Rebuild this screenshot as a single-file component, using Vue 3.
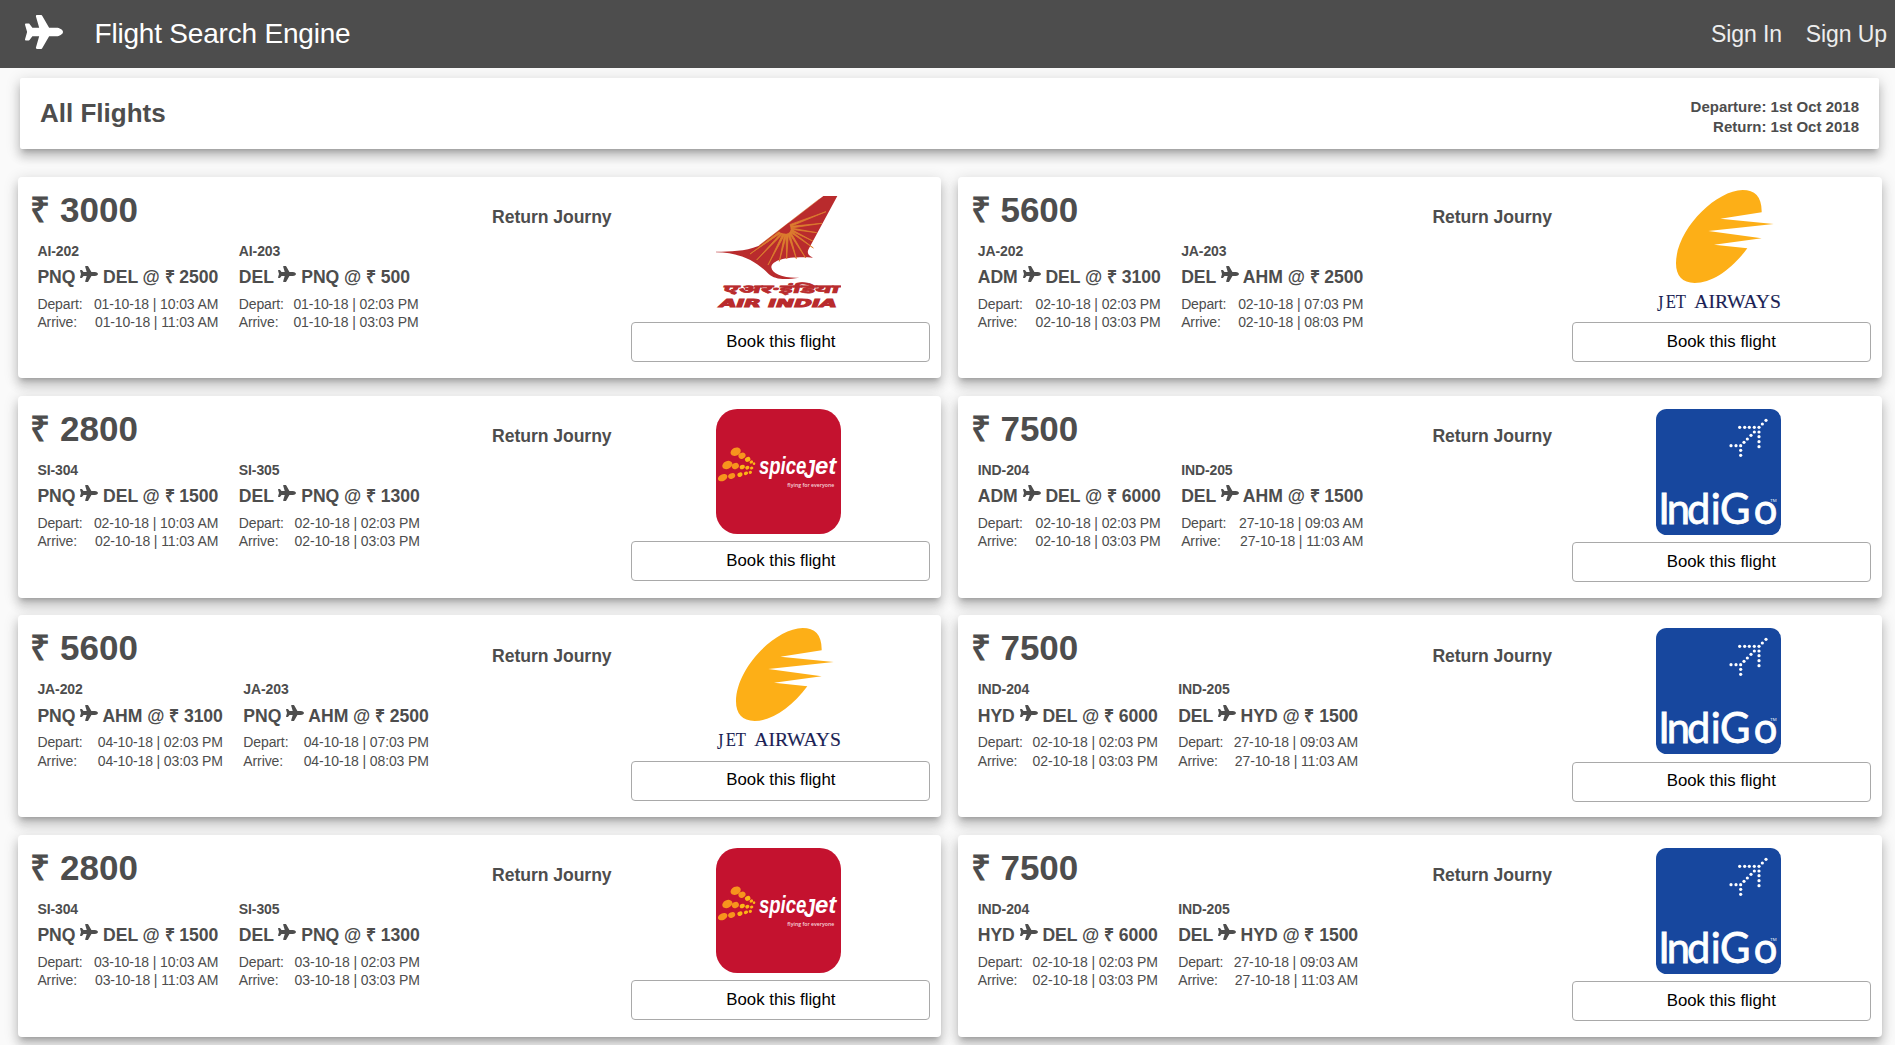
<script setup>
const planePath =
  'M480 192H365.71L260.61 8.06A16.014 16.014 0 0 0 246.71 0h-65.5c-10.63 0-18.3 10.17-15.38 20.39L214.86 192H112l-43.2-57.6c-3.02-4.03-7.77-6.4-12.8-6.4H16.01C5.6 128-2.04 137.78.49 147.88L32 256 .49 364.12C-2.04 374.22 5.6 384 16.01 384H56c5.04 0 9.78-2.37 12.8-6.4L112 320h102.86l-49.03 171.6c-2.92 10.22 4.75 20.4 15.38 20.4h65.5c5.74 0 11.04-3.08 13.89-8.06L365.71 320H480c35.35 0 96-28.65 96-64s-60.65-64-96-64z'

const leg = (code, from, to, price, depart, arrive) => ({ code, from, to, price, depart, arrive })

const spice = (day) => ({
  airline: 'spicejet',
  price: 2800,
  legs: [
    leg('SI-304', 'PNQ', 'DEL', 1500, `${day} | 10:03 AM`, `${day} | 11:03 AM`),
    leg('SI-305', 'DEL', 'PNQ', 1300, `${day} | 02:03 PM`, `${day} | 03:03 PM`),
  ],
})

const indigo = (home) => ({
  airline: 'indigo',
  price: 7500,
  legs: [
    leg('IND-204', home[0], 'DEL', 6000, '02-10-18 | 02:03 PM', '02-10-18 | 03:03 PM'),
    leg('IND-205', 'DEL', home[1], 1500, '27-10-18 | 09:03 AM', '27-10-18 | 11:03 AM'),
  ],
})

const flights = [
  {
    airline: 'airindia',
    price: 3000,
    legs: [
      leg('AI-202', 'PNQ', 'DEL', 2500, '01-10-18 | 10:03 AM', '01-10-18 | 11:03 AM'),
      leg('AI-203', 'DEL', 'PNQ', 500, '01-10-18 | 02:03 PM', '01-10-18 | 03:03 PM'),
    ],
  },
  {
    airline: 'jet',
    price: 5600,
    legs: [
      leg('JA-202', 'ADM', 'DEL', 3100, '02-10-18 | 02:03 PM', '02-10-18 | 03:03 PM'),
      leg('JA-203', 'DEL', 'AHM', 2500, '02-10-18 | 07:03 PM', '02-10-18 | 08:03 PM'),
    ],
  },
  spice('02-10-18'),
  indigo(['ADM', 'AHM']),
  {
    airline: 'jet',
    price: 5600,
    legs: [
      leg('JA-202', 'PNQ', 'AHM', 3100, '04-10-18 | 02:03 PM', '04-10-18 | 03:03 PM'),
      leg('JA-203', 'PNQ', 'AHM', 2500, '04-10-18 | 07:03 PM', '04-10-18 | 08:03 PM'),
    ],
  },
  indigo(['HYD', 'HYD']),
  spice('03-10-18'),
  indigo(['HYD', 'HYD']),
]

// SpiceJet swoosh: cx, cy, rx, ry
const spiceDots = [
  [107, 167, 16, 12], [126, 179, 11, 9], [143, 190, 8.5, 7], [154, 198, 5.5, 4.5], [162, 203, 4, 4],
  [82, 207, 16, 11.5], [106, 210, 11, 9], [127, 213, 8, 6.5], [142, 215, 6.5, 5.5], [155, 216, 5, 4.5],
  [68, 245, 15, 10], [95, 240, 11, 8], [120, 236, 8, 6.5], [138, 232, 6.5, 5], [151, 229, 5, 4.5],
]

const indigoDots = [
  [378, 73], [367, 84], [299, 94], [314, 94], [328, 94], [343, 94], [357, 94],
  [343, 108], [357, 108], [333, 118], [357, 122], [322, 129], [357, 137], [312, 139], [357, 152],
  [273, 149], [288, 149], [302, 149], [302, 163], [302, 178],
]

const airRays = [
  '273,152 180,222 276,156', '276,156 200,240 280,160', '279,160 234,255 285,162',
  '284,162 268,244 290,163', '288,163 290,236 295,162', '293,161 319,236 299,159',
  '297,159 347,234 302,156', '300,156 370,204 303,152', '302,152 368,183 304,148',
  '303,148 380,158 303,144', '303,144 396,130 302,139', '302,139 408,95 299,134',
  '268,155 205,204 273,158',
]
</script>

<template>
  <div class="page">
    <header class="topbar">
      <svg class="brand-icon" viewBox="0 0 576 512"><path :d="planePath" /></svg>
      <h1 class="brand">Flight Search Engine</h1>
      <nav class="nav">
        <a>Sign In</a>
        <a>Sign Up</a>
      </nav>
    </header>

    <section class="summary">
      <h2>All Flights</h2>
      <div class="dates">
        <div>Departure: 1st Oct 2018</div>
        <div>Return: 1st Oct 2018</div>
      </div>
    </section>

    <main class="results">
      <article v-for="(f, i) in flights" :key="i" class="card">
        <div class="info">
          <div class="price">₹ {{ f.price }}</div>
          <div class="legs">
            <div v-for="l in f.legs" :key="l.code" class="leg">
              <div class="code">{{ l.code }}</div>
              <div class="route">{{ l.from }} <svg class="plane" viewBox="0 0 576 512"><path :d="planePath" /></svg> {{ l.to }} @ ₹ {{ l.price }}</div>
              <div class="time"><span>Depart:</span><span>{{ l.depart }}</span></div>
              <div class="time"><span>Arrive:</span><span>{{ l.arrive }}</span></div>
            </div>
          </div>
        </div>
        <div class="kind">Return Journy</div>
        <div class="side">
          <svg v-if="f.airline === 'airindia'" class="logo" viewBox="78 30 375 375">
            <path fill="#b92b2d" d="M78 215C120 215 165 214 205 198L400 48H442L358 203C350 216 352 225 369 233C300 229 246 238 244 262C246 282 280 295 328 293C285 300 255 299 236 282C200 245 155 218 78 217Z" />
            <polygon v-for="r in airRays" :key="r" :points="r" fill="#dc7d2f" stroke="#dc7d2f" stroke-width="2.4" stroke-linejoin="bevel" />
            <path d="M207 197L388 57" stroke="#dc7d2f" stroke-width="1.5" />
            <path fill="#b92b2d" d="M266 153L296 129A17 17 0 1 1 266 153Z" />
            <text transform="translate(97 340) skewX(-16)" class="ai-hindi" textLength="348" lengthAdjust="spacingAndGlyphs">एअर·इंडिया</text>
            <text transform="translate(85 381) skewX(-20)" class="ai-latin" textLength="350" lengthAdjust="spacingAndGlyphs">AIR INDIA</text>
          </svg>
          <svg v-else-if="f.airline === 'jet'" class="logo" viewBox="48 30 375 375">
            <path fill="#fdaf17" d="M365 97C366 50 345 30 308 30C225 32 108 150 108 250C108 287 127 309 164 309C217 309 275 268 322 205L222 194L365 175L205 153L401 132L241 116Z" />
            <g class="jet-text">
              <text x="51" y="393" class="jet-j" textLength="19" lengthAdjust="spacingAndGlyphs">J</text>
              <text x="77" y="383" textLength="61" lengthAdjust="spacingAndGlyphs">ET</text>
              <text x="163" y="383" textLength="260" lengthAdjust="spacingAndGlyphs">AIRWAYS</text>
            </g>
          </svg>
          <svg v-else-if="f.airline === 'spicejet'" class="logo" viewBox="48 39 375 375">
            <rect x="48" y="39" width="375" height="375" rx="64" fill="#c4122f" />
            <ellipse v-for="(d, k) in spiceDots" :key="k" :cx="d[0]" :cy="d[1]" :rx="d[2]" :ry="d[3]" :fill="k % 5 < 2 ? '#f7941d' : '#fbb616'" :transform="`rotate(-25 ${d[0]} ${d[1]})`" />
            <text class="spice-text"><tspan x="177" y="235" textLength="142" lengthAdjust="spacingAndGlyphs">spice</tspan><tspan class="spice-j" x="311" y="247" textLength="34" lengthAdjust="spacingAndGlyphs">J</tspan><tspan x="345" y="235" textLength="64" lengthAdjust="spacingAndGlyphs">et</tspan></text>
            <text x="262" y="273" class="spice-tag" textLength="141" lengthAdjust="spacingAndGlyphs">flying for everyone</text>
          </svg>
          <svg v-else class="logo tall" viewBox="48 39 375 378">
            <rect x="48" y="39" width="375" height="378" rx="32" fill="#17479e" />
            <circle v-for="(d, k) in indigoDots" :key="k" :cx="d[0]" :cy="d[1]" r="4.8" fill="#fff" />
            <text x="55 80 141 212 240 341" y="385" class="indigo-text">IndiGo<tspan class="tm" x="391" y="318">TM</tspan></text>
          </svg>
          <button class="book">Book this flight</button>
        </div>
      </article>
    </main>
  </div>
</template>

<style>
body {
  margin: 0;
  background: #fafafa;
  overflow: hidden;
}
</style>

<style scoped>
.page {
  height: 1045px;
  overflow: hidden;
  background: #fafafa;
  color: #4d4d4d;
  font-family: "Liberation Sans", Arial, sans-serif;
}

.topbar {
  display: flex;
  align-items: center;
  height: 68px;
  padding: 0 8px 0 25px;
  background: #4d4d4d;
  color: #fff;
}

.brand-icon {
  width: 38px;
  height: 34px;
  margin-top: -5px;
  fill: #fff;
}

.brand {
  margin: 0 0 0 31.5px;
  font-size: 28px;
  font-weight: 400;
  letter-spacing: -0.2px;
}

.nav {
  display: flex;
  gap: 24px;
  margin-left: auto;
  color: #ededed;
  font-size: 23px;
  letter-spacing: -0.1px;
}

.summary {
  display: flex;
  align-items: center;
  justify-content: space-between;
  box-sizing: border-box;
  height: 71px;
  margin: 10px 16px 0 20px;
  padding: 0 20px;
  border-radius: 2px;
  background: #fff;
}

.summary h2 {
  margin: 0;
  font-size: 26px;
}

.dates {
  margin-top: 6px;
  font-size: 15px;
  font-weight: 700;
  line-height: 20px;
  text-align: right;
}

.summary,
.card {
  box-shadow: 0 5px 5px -3px rgba(0, 0, 0, 0.2), 0 8px 10px 1px rgba(0, 0, 0, 0.14),
    0 3px 14px 2px rgba(0, 0, 0, 0.12);
}

.results {
  display: grid;
  grid-template-columns: 923.4px 923.4px;
  grid-template-rows: 201.5px 202.1px 202.1px 202.3px;
  gap: 17.5px 17px;
  margin: 27.5px 0 0 18px;
}

.card {
  display: flex;
  border-radius: 4px;
  background: #fff;
}

.info {
  width: 474px;
}

.price {
  margin: 13px 0 0 12.3px;
  font-size: 35px;
  font-weight: 700;
  line-height: 40px;
}

.legs {
  display: flex;
  gap: 20.5px;
  margin: 12px 0 0 19.4px;
}

.code {
  font-size: 14px;
  font-weight: 700;
  line-height: 18px;
  letter-spacing: -0.1px;
}

.route {
  margin-top: 4.7px;
  font-size: 17.6px;
  font-weight: 700;
  line-height: 26px;
  letter-spacing: -0.05px;
  white-space: nowrap;
}

.plane {
  width: 18px;
  height: 16px;
  vertical-align: 1px;
  fill: #4d4d4d;
}

.time {
  display: flex;
  justify-content: space-between;
  gap: 9.5px;
  font-size: 14px;
  line-height: 18.4px;
  letter-spacing: -0.12px;
  white-space: nowrap;
}

.route + .time {
  margin-top: 4.6px;
}

.kind {
  margin-top: 29.6px;
  font-size: 17.6px;
  font-weight: 700;
  line-height: 22px;
  letter-spacing: -0.05px;
}

.side {
  display: flex;
  flex-direction: column;
  align-items: flex-start;
  width: 299px;
  margin: 13.2px 11px 0 auto;
}

.logo {
  width: 125px;
  height: 125px;
  margin-left: 84.5px;
  flex: none;
}

.logo.tall {
  height: 126px;
}

.book {
  width: 299px;
  height: 40px;
  margin-top: 7.6px;
  padding: 0 0 1px;
  border: 1px solid #a9a9a9;
  border-radius: 4px;
  background: #fff;
  color: #000;
  font-family: inherit;
  font-size: 16.8px;
}

.ai-hindi {
  font: 700 35px "Noto Sans", sans-serif;
  fill: #b92b2d;
  stroke: #b92b2d;
  stroke-width: 2px;
}

.ai-latin {
  font: 700 33px "DejaVu Sans", sans-serif;
  fill: #b92b2d;
  stroke: #b92b2d;
  stroke-width: 3px;
}

.jet-text {
  font-family: "Liberation Serif", serif;
  font-size: 54px;
  fill: #1b1f55;
  stroke: #1b1f55;
  stroke-width: 0.4px;
}

.jet-j {
  font-size: 70px;
}

.spice-text {
  font-family: "Liberation Sans", sans-serif;
  font-size: 70px;
  font-style: italic;
  font-weight: 700;
  fill: #fff;
}

.spice-j {
  font-size: 80px;
}

.spice-tag {
  font: 600 15px "Open Sans", sans-serif;
  fill: #f6d5da;
}

.indigo-text {
  font-family: Lato, sans-serif;
  font-size: 125px;
  font-weight: 400;
  fill: #fff;
  stroke: #fff;
  stroke-width: 2.4px;
}

.tm {
  font: 400 13px "Open Sans", sans-serif;
  stroke: none;
}
</style>
